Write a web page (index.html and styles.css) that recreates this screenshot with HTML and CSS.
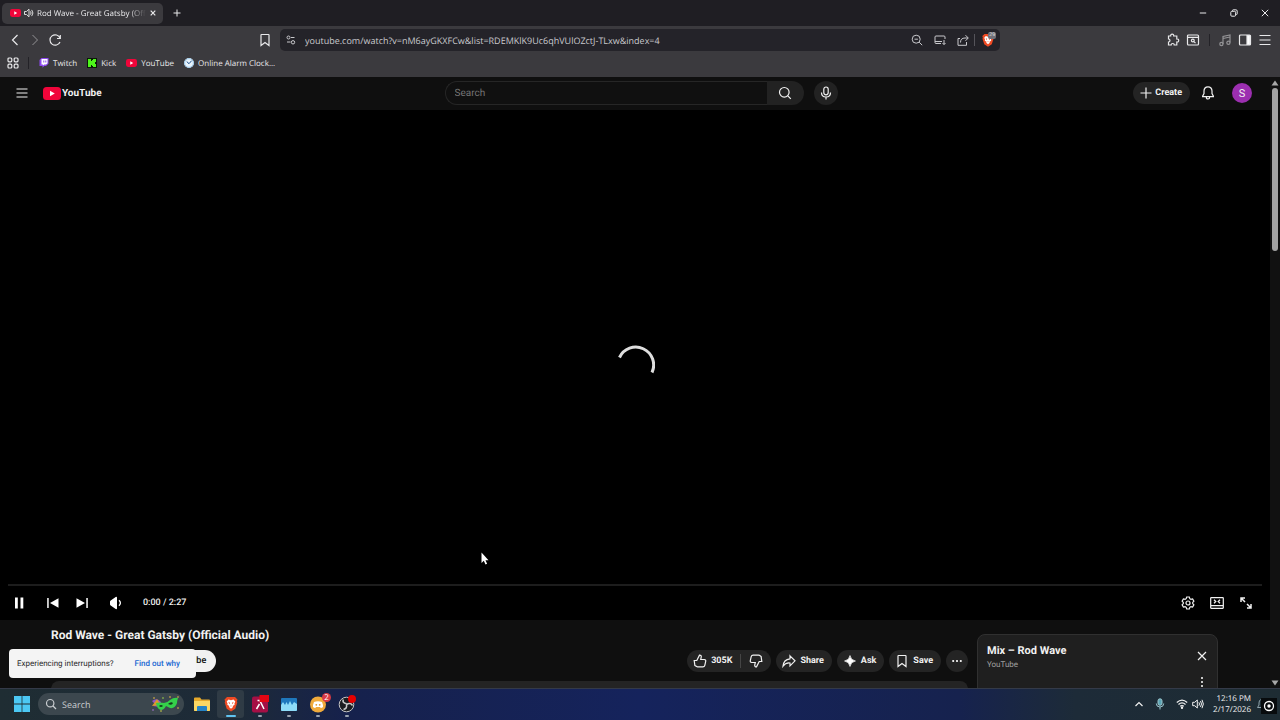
FILE: index.html
```html
<!DOCTYPE html>
<html lang="en">
<head>
<meta charset="utf-8">
<title>Rod Wave - Great Gatsby (Official Audio) - YouTube</title>
<link rel="stylesheet" href="styles.css">
</head>
<body>
<svg class="sprite" aria-hidden="true">
  <symbol id="yt-mark" viewBox="0 0 18 13"><rect width="18" height="13" rx="3.5" fill="#f0053a"/><path d="M7 3.8v5.4l4.8-2.7z" fill="#fff"/></symbol>
  <symbol id="bookmark" viewBox="0 0 14 14"><path d="M3.5 1.5h7q.5 0 .5.5v10.5L7 9.6l-4 2.9V2q0-.5.5-.5z"/></symbol>
  <symbol id="brave" viewBox="0 0 16 16"><path d="M4 1h8l2.5 2.5-.6 1.7.4 1.3-2 6.3L8 15.6l-4.300-2.800-2-6.300.4-1.300-.6-1.700z" fill="#ee4a23"/><path d="M8 4.200l2.500-.7 1.800 2-.9 2.200.3 1.100-2 1.300.3 1L8 12.800l-2-1.700.3-1-2-1.300.3-1.100-.9-2.200 1.800-2z" fill="#fff"/><path d="M5.300 6l1.700.7-.3 1.500zM10.700 6L9 6.700l.3 1.500zM7 9.700h2l-1 .9z" fill="#ee4a23"/></symbol>
</svg>

<header class="browser">
  <div class="tabstrip">
    <div class="tab">
      <svg class="fav" fill="none"><use href="#yt-mark"/></svg>
      <svg class="i10" viewBox="0 0 10 10"><path d="M.5 3.500h2L5 1.200v7.600L2.500 6.500h-2z" fill="none" stroke="#ddd"/><path d="M6.500 3.400q1.200 1.600 0 3.200M7.700 1.900q2.500 3.100 0 6.200" fill="none" stroke="#ddd"/></svg>
      <span class="tab-title">Rod Wave - Great Gatsby (Official Audio)</span>
      <button class="bare" aria-label="Close tab"><svg class="i8 line" viewBox="0 0 8 8"><path d="M1.700 1.700l4.600 4.600M6.300 1.700L1.700 6.300"/></svg></button>
    </div>
    <button class="bare newtab" aria-label="New tab"><svg class="i8 line thin" viewBox="0 0 8 8"><path d="M4 .5v7M.5 4h7"/></svg></button>
    <div class="window-controls">
      <button class="bare" aria-label="Minimize"><svg class="i8 line thin" viewBox="0 0 8 8"><path d="M.8 4h6.400"/></svg></button>
      <button class="bare" aria-label="Restore"><svg class="i8 line thin" viewBox="0 0 8 8"><rect x=".8" y="2.300" width="4.800" height="4.900" rx="1"/><path d="M2.500 2V1.500q0-.7.7-.7h2.700q1.300 0 1.300 1.300v2.700q0 .8-.9.800"/></svg></button>
      <button class="bare" aria-label="Close"><svg class="i8 line thin" viewBox="0 0 8 8"><path d="M.8.8l6.400 6.400M7.200.8L.8 7.200"/></svg></button>
    </div>
  </div>

  <div class="toolbar">
    <div class="nav">
      <button class="bare" aria-label="Back"><svg class="i14 line" viewBox="0 0 14 14"><path d="M9.500 2L4.500 7l5 5"/></svg></button>
      <button class="bare dim" aria-label="Forward"><svg class="i14 line thin" viewBox="0 0 14 14"><path d="M4.500 2l5 5-5 5"/></svg></button>
      <button class="bare" aria-label="Reload"><svg class="i14 line" viewBox="0 0 14 14"><path d="M12 9a5.200 5.200 0 1 1 0-4M12.300 2v3.500H9"/></svg></button>
      <button class="bare push" aria-label="Bookmark this page"><svg class="i14 line"><use href="#bookmark"/></svg></button>
    </div>
    <div class="address">
      <svg class="i10 line thin" viewBox="0 0 10 10"><circle cx="2.500" cy="2.500" r="1.500"/><path d="M5 2.500h3.500M1 7h3.500"/><circle cx="7" cy="7.300" r="1.700"/></svg>
      <input class="url" aria-label="Address" value="youtube.com/watch?v=nM6ayGKXFCw&amp;list=RDEMKlK9Uc6qhVUlOZctJ-TLxw&amp;index=4">
      <div class="address-tools">
        <button class="bare" aria-label="Zoom"><svg class="i12 line thin" viewBox="0 0 12 12"><circle cx="5.200" cy="5.200" r="4"/><path d="M8.200 8.200l3 3M3.500 5.200h3.400"/></svg></button>
        <button class="bare" aria-label="Install app"><svg class="i12 line thin" viewBox="0 0 12 12"><path d="M11 5V3q0-1-1-1H2Q1 2 1 3v5.500q0 1 1 1h5M1 7.500h7M10 6v4.500M8.500 9l1.500 1.500L11.500 9"/></svg></button>
        <button class="bare" aria-label="Share"><svg class="i12 line thin" viewBox="0 0 12 12"><path d="M3 4.500H1v6.800h8.500V8M3.500 8.500q0-4.500 4.500-4.500h3M8.500 1.200L11.300 4 8.500 6.800"/></svg></button>
      </div>
      <button class="bare shield" aria-label="Brave Shields"><svg class="i14"><use href="#brave"/></svg><span class="count">29</span></button>
    </div>
    <div class="extras">
      <button class="bare" aria-label="Extensions"><svg class="i14 line" viewBox="0 0 14 14"><path d="M2.500 3h2.200q-.2-1.800 1.500-1.800T7.700 3h3.100v3q1.900-.1 1.900 1.500T10.800 9v3H8.200q.1-1.500-1.500-1.500T5.200 12H2.500V9Q4 9 4 7.500T2.500 6z"/></svg></button>
      <button class="bare" aria-label="Search tabs"><svg class="i14 line" viewBox="0 0 14 14"><rect x="1.500" y="2" width="11" height="10" rx="1"/><path d="M1.500 4.300h11M7.900 8.600l1.600 1.600"/><circle cx="6.800" cy="7.500" r="1.400"/></svg></button>
      <span class="rule"></span>
      <button class="bare dim" aria-label="Playlist"><svg class="i14 line" viewBox="0 0 14 14"><path d="M5 11V3.500l7-1.500v7.500M5 5.500L12 4"/><circle cx="3.400" cy="11" r="1.600"/><circle cx="10.400" cy="9.700" r="1.600"/></svg></button>
      <button class="bare" aria-label="Sidebar"><svg class="i14 line" viewBox="0 0 14 14"><rect x="1.500" y="2" width="11" height="10" rx="1"/><path d="M9 2.500h3v9H9z" fill="#fff"/></svg></button>
      <button class="bare" aria-label="Menu"><svg class="i14 line" viewBox="0 0 14 14"><path d="M1.500 2.500h11M1.500 7h11M1.500 11.500h11"/></svg></button>
    </div>
  </div>

  <nav class="bookmarks" aria-label="Bookmarks">
    <button class="bare" aria-label="All bookmarks"><svg class="i12 line" viewBox="0 0 12 12"><rect x="1" y="1" width="3.800" height="3.800" rx="1"/><rect x="7.200" y="1" width="3.800" height="3.800" rx="1"/><rect x="1" y="7.200" width="3.800" height="3.800" rx="1"/><rect x="7.200" y="7.200" width="3.800" height="3.800" rx="1"/></svg></button>
    <span class="rule"></span>
    <a href="#"><svg class="i10" viewBox="0 0 10 10"><path d="M.5 2L2.500 0h7v5.800L7 8H5.300L3.500 9.800V8H.5z" fill="#8d48f0"/><path d="M2.500 1h6v4.300L7 6.500H5.200L4 7.600V6.500H2.500z" fill="#fff"/><path d="M4.800 2.500v2M6.800 2.500v2" stroke="#8d48f0"/></svg>Twitch</a>
    <a href="#"><svg class="i10" viewBox="0 0 10 10"><rect width="10" height="10" fill="#0b1a08"/><path d="M1 1h3v2h1V2h1V1h3v3H8v2h1v3H6V8H5V7H4v2H1z" fill="#4ef51b"/></svg>Kick</a>
    <a href="#"><svg class="fav"><use href="#yt-mark"/></svg>YouTube</a>
    <a href="#"><svg class="i10" viewBox="0 0 10 10"><circle cx="5" cy="5" r="4.900" fill="#e8f3fc"/><circle cx="5" cy="5" r="4.400" fill="none" stroke="#9bc8ea"/><path d="M2.700 3.500L5 5.700l2.600-3" fill="none" stroke="#1d4f8a"/></svg>Online Alarm Clock...</a>
  </nav>
</header>

<div class="viewport">
  <div class="page">
    <header class="masthead">
      <div class="brand">
        <button class="bare" aria-label="Guide"><svg class="i14 line" viewBox="0 0 14 14"><path d="M1.500 3h11M1.500 7h11M1.500 11h11"/></svg></button>
        <a class="logo" href="#"><svg class="logo-mark"><use href="#yt-mark"/></svg>YouTube</a>
      </div>
      <form class="search">
        <input class="search-box" type="search" placeholder="Search" aria-label="Search">
        <button class="search-go" type="button" aria-label="Search"><svg class="i14 line" viewBox="0 0 14 14"><circle cx="6.300" cy="6.300" r="4.800"/><path d="M9.800 9.800l3 3"/></svg></button>
        <button class="mic" type="button" aria-label="Search with your voice"><svg class="i14 line" viewBox="0 0 14 14"><rect x="4.800" y="1" width="4.400" height="7.800" rx="2.200"/><path d="M2.500 6.500q0 4.500 4.500 4.500t4.500-4.500M7 11v2.500"/></svg></button>
      </form>
      <div class="account">
        <button class="create"><svg class="i12 line" viewBox="0 0 12 12"><path d="M6 .5v11M.5 6h11"/></svg>Create</button>
        <button class="bare" aria-label="Notifications"><svg class="i14 line" viewBox="0 0 14 14"><path d="M7 .8c-2.500 0-4 1.800-4 4.200v2.500L1.600 10.200v.5h10.800v-.5L11 7.500V5C11 2.600 9.500.8 7 .8zM5.300 11q0 2 1.700 2t1.700-2"/></svg></button>
        <button class="avatar" aria-label="Account">S</button>
      </div>
    </header>

    <section class="player" aria-label="Video player">
      <div class="stage"></div>
      <svg class="spinner" viewBox="0 0 40 40"><path d="M4.500 12.500A17.300 17.300 0 0 1 37 27.500" fill="none" stroke="#dedede" stroke-width="3"/></svg>
      <div class="progress"></div>
      <div class="controls">
        <button class="bare" aria-label="Pause"><svg class="i14" viewBox="0 0 14 14"><path d="M3 1.500h2.800v11H3zM8.500 1.500h2.800v11H8.500z" fill="#fff"/></svg></button>
        <button class="bare prev" aria-label="Previous"><svg class="i14" viewBox="0 0 14 14"><path d="M1.200 2h1.500v10H1.200zM12.500 2.200v9.600L4 7z" fill="#fff"/></svg></button>
        <button class="bare" aria-label="Next"><svg class="i14" viewBox="0 0 14 14"><path d="M11.300 2h1.500v10h-1.500zM1.500 2.200v9.600L10 7z" fill="#fff"/></svg></button>
        <button class="bare volume" aria-label="Mute"><svg class="i14" viewBox="0 0 14 14"><path d="M1 5.800Q1 5 1.700 4.500L6.700.9Q8 .5 8 1.700v10.600Q8 13.500 6.700 13.100L1.700 9.500Q1 9 1 8.200z" fill="#fff"/><path d="M10 4.300q2.800 2.700 0 5.400" fill="none" stroke="#fff" stroke-width="1.300"/></svg></button>
        <span class="time">0:00 / 2:27</span>
        <div class="controls-end">
          <button class="bare" aria-label="Settings"><svg class="i14 line" viewBox="0 0 14 14"><path d="M5.700 1h2.600l.5 1.700 1.100.6 1.700-.4 1.300 2.200L11.700 6.400v1.200l1.200 1.300-1.300 2.200-1.700-.4-1.100.6-.5 1.700H5.700l-.5-1.700-1.100-.6-1.700.4-1.300-2.200 1.200-1.300V6.400L1.100 5.100l1.300-2.200 1.700.4 1.100-.6z"/><circle cx="7" cy="7" r="2"/></svg></button>
          <button class="bare" aria-label="Theater mode"><svg class="i14 line" viewBox="0 0 14 14"><rect x=".7" y="1.700" width="12.600" height="10.600" rx=".5"/><path d="M1 9.700h12M4 3.800L5.800 5.500 4 7.200M10 3.800L8.200 5.500 10 7.200"/></svg></button>
          <button class="bare" aria-label="Full screen"><svg class="i14 line" viewBox="0 0 14 14"><path d="M2 6V2h4M2 2l4 4M12 8v4H8M12 12L8 8" stroke-width="1.500"/></svg></button>
        </div>
      </div>
    </section>

    <div class="below">
      <main class="primary">
        <h1>Rod Wave - Great Gatsby (Official Audio)</h1>
        <div class="meta">
          <button class="subscribe">Subscribe</button>
          <div class="actions">
            <div class="votes">
              <button class="like"><svg class="i14 line" viewBox="0 0 14 14"><path d="M1.200 6.500h2.600L6.500 1.200q1.800-.1 1.800 1.600L7.700 5.500h3.600q1.800.2 1.400 1.900l-.9 3.900q-.4 1.500-1.900 1.500H4.500q-.8 0-2.600-1.200z"/></svg>305K</button>
              <button class="dislike" aria-label="Dislike"><svg class="i14 line" viewBox="0 0 14 14"><path d="M12.800 7.500h-2.600L7.500 12.800q-1.800.1-1.800-1.600l.6-2.700H2.700Q.9 8.300 1.300 6.600l.9-3.900Q2.600 1.200 4.100 1.200h5.400q.8 0 2.600 1.200z"/></svg></button>
            </div>
            <button class="pill"><svg class="i14 line" viewBox="0 0 14 14"><path d="M8 1.800L13 6.800 8 11.800V9Q3.500 8.500 1 12.200 1.500 5.500 8 4.800z"/></svg>Share</button>
            <button class="pill"><svg class="i14" viewBox="0 0 14 14"><path d="M7 1.500Q7.800 6.200 12.500 7 7.800 7.800 7 12.500 6.200 7.800 1.500 7 6.200 6.200 7 1.500z" fill="#fff" stroke="#fff" stroke-width=".6"/></svg>Ask</button>
            <button class="pill"><svg class="i14 line"><use href="#bookmark"/></svg>Save</button>
            <button class="more" aria-label="More actions"><svg class="i10" viewBox="0 0 10 10"><g fill="#fff"><circle cx="1.200" cy="5" r="1.100"/><circle cx="5" cy="5" r="1.100"/><circle cx="8.800" cy="5" r="1.100"/></g></svg></button>
          </div>
        </div>
        <div class="description"></div>
      </main>
      <aside class="mix">
        <div class="mix-text"><h2>Mix – Rod Wave</h2><p>YouTube</p></div>
        <div class="mix-tools">
          <button class="bare" aria-label="Close playlist"><svg class="i12 line" viewBox="0 0 12 12"><path d="M2 2l8 8M10 2l-8 8"/></svg></button>
          <button class="bare" aria-label="Playlist menu"><svg class="i12" viewBox="0 0 12 12"><g fill="#fff"><circle cx="6" cy="2" r="1"/><circle cx="6" cy="6" r="1"/><circle cx="6" cy="10" r="1"/></g></svg></button>
        </div>
      </aside>
    </div>

    <div class="toast" role="status"><span>Experiencing interruptions?</span><a href="#">Find out why</a></div>
  </div>
  <div class="scrollbar">
    <svg class="arrow" viewBox="0 0 8 6"><path d="M4 .5L7.500 5.500h-7z"/></svg>
    <div class="track"><div class="thumb"></div></div>
    <svg class="arrow" viewBox="0 0 8 6"><path d="M4 5.500L.5.5h7z"/></svg>
  </div>
</div>

<footer class="taskbar">
  <button class="bare start" aria-label="Start"><svg class="i16" viewBox="0 0 16 16"><path d="M0 0h7.600v7.600H0zM8.400 0H16v7.600H8.400zM0 8.400h7.600V16H0zM8.400 8.400H16V16H8.400z" fill="#4cc8f4"/></svg></button>
  <button class="task-search"><svg class="i12 line" viewBox="0 0 12 12"><circle cx="5.200" cy="5.200" r="3.700"/><path d="M8 8l3 3"/></svg>Search
    <svg class="mask" viewBox="0 0 30 18"><path d="M2 6q5-4 9 1l-2 5-6-1 2-2z" fill="#9254c8"/><path d="M2 11l5-7 4 6z" fill="#d99a2b"/><path d="M6 8q4-1 8 0 3 0 6-3 4-3 8-2-1 3-1 5-2 6-7 5-2-1-4-2-2 4-5 4-4-1-5-7z" fill="#34d04a"/><path d="M9 11q2-2 4 0-2 2-4 0zM18 9q3-3 5-1-1 3-5 1z" fill="#153a1c"/><g><circle cx="4" cy="3" r=".8" fill="#f5c542"/><circle cx="13" cy="3" r=".8" fill="#a6e04a"/><circle cx="20" cy="2" r=".8" fill="#f5c542"/><circle cx="28" cy="2" r=".8" fill="#e5c04a"/><circle cx="3" cy="15" r=".8" fill="#b07be0"/><circle cx="28" cy="13" r=".8" fill="#f5c542"/><circle cx="11" cy="16" r=".8" fill="#d6e04a"/></g></svg>
  </button>
  <div class="apps">
    <button class="app" aria-label="File Explorer"><svg class="i18" viewBox="0 0 18 18"><path d="M1 3.500q0-1 1-1h5l1.500 2H16q1 0 1 1V15q0 1-1 1H2q-1 0-1-1z" fill="#e6a92b"/><path d="M1 6h16v9q0 1-1 1H2q-1 0-1-1z" fill="#fbd763"/><path d="M4 16v-4q0-1 1-1h8q1 0 1 1v4z" fill="#2583c6"/></svg></button>
    <button class="app active" aria-label="Brave"><svg class="i16"><use href="#brave"/></svg></button>
    <button class="app running" aria-label="Lunar Client"><svg class="i18" viewBox="0 0 18 18"><rect x="1" y="1.500" width="16" height="16" rx="2" fill="#a50f45"/><path d="M6.500 5.500h2.300L13 14M8.500 9L5.500 14" fill="none" stroke="#fff" stroke-width="1.500"/><rect x="8.500" width="9.500" height="7" fill="#e30613"/></svg></button>
    <button class="app running" aria-label="Performance Monitor"><svg class="i18" viewBox="0 0 18 18"><rect x="1" y="3" width="16" height="13" rx="1" fill="#1f78bd"/><path d="M1 10l2-3 2 3 1.500-3 1.500 3 2-4 2 4 2-3 3 2v6q0 1-1 1H2q-1 0-1-1z" fill="#8edcf8"/></svg></button>
    <button class="app running" aria-label="Discord, 2 notifications"><svg class="i18" viewBox="0 0 18 18"><circle cx="9" cy="9.500" r="8" fill="#f0aa3c"/><path d="M5 7q4-1.600 8 0 1.300 3 1 5-1 1-2.300 1l-.7-1H7l-.7 1Q5 13 4 12q-.3-2 1-5z" fill="#fff"/><circle cx="7.300" cy="9.800" r=".9" fill="#e0962b"/><circle cx="10.700" cy="9.800" r=".9" fill="#e0962b"/></svg><span class="badge">2</span></button>
    <button class="app running" aria-label="OBS Studio"><svg class="i18" viewBox="0 0 18 18"><circle cx="8.500" cy="9.500" r="7.300" fill="#1b1c20" stroke="#c8c8c8"/><path d="M8.500 8.800Q4 8 5.300 4.500M8.500 9.500q4-2.500 6 1M8.500 9.500q1 4-3 5" fill="none" stroke="#c8c8c8" stroke-width="1.600"/><circle cx="14" cy="4" r="4" fill="#e60000"/></svg></button>
  </div>
  <div class="tray">
    <button class="bare" aria-label="Hidden icons"><svg class="i10 line" viewBox="0 0 10 10"><path d="M1.500 7L5 3.500 8.500 7"/></svg></button>
    <button class="bare tray-mic" aria-label="Microphone"><svg class="i12 line thin" viewBox="0 0 12 12"><rect x="4" y=".8" width="4" height="6.500" rx="2" fill="#5ca5b5"/><path d="M2.300 5.500q0 3.500 3.700 3.500t3.700-3.500M6 9v2.500"/></svg></button>
    <button class="bare net" aria-label="Network and sound"><svg class="i12 line" viewBox="0 0 12 12"><path d="M.8 4.500Q6-.2 11.200 4.500M2.500 6.500Q6 3.300 9.500 6.500M4.200 8.300Q6 6.800 7.800 8.300"/><circle cx="6" cy="9.800" r=".6"/></svg><svg class="i12 line thin" viewBox="0 0 12 12"><path d="M.7 4.300h2L5.300 2v8L2.700 7.700h-2zM6.900 4.300q1.200 1.700 0 3.400M8.500 3q2 3 0 6M10 1.800q2.700 4.200 0 8.400"/></svg></button>
    <div class="clock"><span>12:16 PM</span><span>2/17/2026</span></div>
    <div class="bell"><svg class="i12 line thin" viewBox="0 0 12 12"><path d="M9.500 1.500Q3 0 3 5v2L1.500 9.500h9M5 10.500q1 1 2 0M7.500 4h3l-3 3h3"/></svg>
      <svg class="capture" viewBox="0 0 16 16"><rect width="16" height="16" fill="#080b0d"/><circle cx="8" cy="8" r="4.500" fill="none" stroke="#fff" stroke-width="1.300"/><circle cx="8" cy="8" r="1.700" fill="#fff"/></svg></div>
  </div>
</footer>

<svg class="pointer" viewBox="0 0 8 13"><path d="M.5.5v10.500l2.300-2.200 1.700 3.700 1.600-.7-1.600-3.600h3z" fill="#fff"/></svg>
</body>
</html>
```
FILE: styles.css
```css
* { box-sizing: border-box; }

body {
  margin: 0;
  height: 100vh;
  display: flex;
  flex-direction: column;
  overflow: hidden;
  background: #0f0f0f;
  color: #f1f1f1;
  font-family: Roboto, sans-serif;
  font-size: 9px;
  text-rendering: geometricPrecision;
}

button, input { font: inherit; color: inherit; text-rendering: inherit; }
button { border: 0; padding: 0; background: none; }
a { color: inherit; text-decoration: none; }
h1, h2, p { margin: 0; }
svg { display: block; flex: none; }

.sprite { position: absolute; width: 0; height: 0; }
.i8 { width: 8px; height: 8px; }
.i10 { width: 10px; height: 10px; }
.i12 { width: 12px; height: 12px; }
.i14 { width: 14px; height: 14px; }
.i16 { width: 16px; height: 16px; }
.i18 { width: 18px; height: 18px; }
.fav { width: 11px; height: 8px; }
.line { fill: none; stroke: currentColor; stroke-width: 1.2; }
.thin { stroke-width: 1; }
.bare { display: flex; align-items: center; justify-content: center; }
.dim { opacity: 0.5; }

/* Browser chrome */
.browser {
  flex: none;
  background: #3b3a3e;
  color: #e9e9eb;
  font-family: "Open Sans", "Noto Sans", sans-serif;
  font-size: 8px;
  font-weight: 500;
}

.tabstrip {
  display: flex;
  align-items: center;
  height: 26px;
  padding: 0 11px 0 2px;
  background: #1f1e23;
}

.tab {
  display: flex;
  align-items: center;
  width: 161px;
  height: 21px;
  padding: 0 6px 0 8px;
  gap: 3px;
  border-radius: 5px;
  background: #3b3a3e;
}

.tab-title {
  flex: 1;
  overflow: hidden;
  white-space: nowrap;
  mask-image: linear-gradient(90deg, #000 85%, transparent);
}

.newtab { margin-left: 10px; }
.window-controls { display: flex; gap: 23px; margin-left: auto; }

.toolbar { display: flex; align-items: center; height: 28px; }
.nav, .extras { display: flex; align-items: center; gap: 6px; flex: 0 0 280px; padding: 0 8px; }
.extras { justify-content: flex-end; }
.push { margin-left: auto; }

.rule {
  width: 6px;
  height: 12px;
  background: linear-gradient(#232227, #232227) center / 1px 100% no-repeat;
}

.address {
  display: flex;
  align-items: center;
  flex: 1;
  height: 22px;
  padding: 0 5px 0 6px;
  border-radius: 5px;
  background: #242329;
  color: #c9c9cd;
}

.url {
  flex: 1;
  min-width: 0;
  margin-left: 9px;
  padding: 0;
  border: 0;
  outline: 0;
  background: none;
  font-size: 9px;
}

.address-tools {
  display: flex;
  gap: 11px;
  padding-right: 5px;
  border-right: 1px solid #55545a;
}

.shield { position: relative; margin-left: 6px; }

.count {
  position: absolute;
  top: -1px;
  right: -1px;
  padding: 0 1px;
  border-radius: 2px;
  background: #707078;
  color: #eee;
  font-size: 5px;
  line-height: 7px;
}

.bookmarks {
  display: flex;
  align-items: center;
  height: 23px;
  padding: 0 7px 5px;
}

.bookmarks a { display: flex; align-items: center; gap: 4px; margin-right: 10px; }
.bookmarks .rule { margin: 0 8px 0 6px; }

/* Page */
.viewport { display: flex; flex: 1; min-height: 0; }

.page {
  position: relative;
  display: flex;
  flex-direction: column;
  flex: 1;
  min-width: 0;
  overflow: hidden;
}

.masthead {
  display: grid;
  grid-template-columns: 1fr auto 1fr;
  align-items: center;
  flex: none;
  height: 33px;
  padding: 0 0 1px 12px;
}

.brand, .account, .search { display: flex; align-items: center; }
.brand { gap: 14px; padding-left: 3px; }

.logo {
  display: flex;
  align-items: center;
  gap: 1px;
  font-size: 10px;
  font-weight: 700;
}

.logo-mark { width: 18px; height: 13px; }

.search-box {
  width: 322px;
  height: 24px;
  padding: 0 9px;
  border: 1px solid #262626;
  border-right: 0;
  border-radius: 12px 0 0 12px;
  outline: 0;
  background: #101010;
  font-size: 10px;
}

.search-box::placeholder { color: #757575; opacity: 1; }

.search-go, .mic, .create, .pill, .more, .votes, .like, .dislike {
  display: flex;
  align-items: center;
  justify-content: center;
}

.search-go { width: 37px; height: 24px; border-radius: 0 12px 12px 0; background: #222; }
.mic { width: 24px; height: 24px; margin-left: 10px; border-radius: 50%; background: #222; }

.account { justify-content: flex-end; gap: 11px; padding-right: 18px; }

.create {
  gap: 3px;
  height: 22px;
  padding: 0 8px 0 7px;
  border-radius: 11px;
  background: #242424;
  font-weight: 700;
}

.avatar {
  width: 20px;
  height: 20px;
  margin-left: 6px;
  border-radius: 50%;
  background: #9c2fb0;
  font-size: 11px;
}

.player {
  position: relative;
  display: flex;
  flex-direction: column;
  flex: 1;
  background: #000;
}

.stage { flex: 1; }
.spinner { position: absolute; inset: 0; width: 40px; height: 40px; margin: auto; }
.progress { height: 2px; margin: 0 8px; background: #1d1d1d; }

.controls { display: flex; align-items: center; height: 34px; padding: 0 17px 0 12px; }
.prev { margin: 0 15px 0 20px; }
.volume { margin: 0 20px; }
.time { font-weight: 500; }
.controls-end { display: flex; gap: 15px; margin-left: auto; }

.below {
  display: grid;
  grid-template-columns: 1fr 241px;
  gap: 9px;
  flex: 0 0 68px;
  padding: 0 52px 0 51px;
  overflow: hidden;
}

.primary { display: flex; flex-direction: column; padding-top: 7px; min-width: 0; }
h1 { font-size: 12px; line-height: 16px; }
.meta { display: flex; align-items: center; justify-content: space-between; margin: 7px 0 9px; }

.subscribe {
  height: 22px;
  margin-left: 105px;
  padding: 0 10px;
  border-radius: 11px;
  background: #f1f1f1;
  color: #0f0f0f;
  font-weight: 500;
}

.actions { display: flex; gap: 5px; font-weight: 700; }
.votes, .pill, .more { height: 22px; border-radius: 11px; background: #242424; }
.like { gap: 4px; padding: 0 8px 0 6px; border-right: 1px solid #454545; }
.dislike { width: 30px; }
.pill { gap: 4px; padding: 0 8px 0 6px; }
.more { width: 22px; }
.description { flex: 0 0 60px; border-radius: 8px; background: #242424; }

.mix {
  display: flex;
  justify-content: space-between;
  height: 100px;
  margin-top: 14px;
  padding: 9px 9px 0 9px;
  border: 1px solid #303030;
  border-radius: 8px;
  background: #1f1f1f;
}

h2 { font-size: 11px; line-height: 14px; }
.mix p { margin-top: 2px; color: #a0a0a0; font-size: 8px; line-height: 10px; }
.mix-tools { display: flex; flex-direction: column; gap: 14px; padding-top: 6px; }

.toast {
  position: absolute;
  left: 9px;
  bottom: 10px;
  display: flex;
  align-items: center;
  gap: 21px;
  height: 29px;
  padding: 0 16px 0 8px;
  border-radius: 4px;
  background: #f4f4f4;
  color: #2b2b2b;
  font-size: 8px;
}

.toast a { color: #1967d2; font-weight: 500; }

.scrollbar {
  display: flex;
  flex-direction: column;
  align-items: center;
  gap: 2px;
  width: 10px;
  padding: 3px 0 2px;
  background: #111;
}

.arrow { width: 8px; height: 6px; fill: #a8a8a8; }
.track { flex: 1; }
.thumb { width: 6px; height: 163px; border-radius: 3px; background: #a3a3a3; }

/* Taskbar */
.taskbar {
  display: flex;
  align-items: center;
  flex: 0 0 32px;
  padding: 0 3px 1px 14px;
  border-top: 1px solid #343a48;
  background: linear-gradient(90deg, #1f2d33 0, #1d2a38 19%, #16214c 27%, #15235c 50%, #16224e 75%, #1d2b38 84%, #1e2c33 100%);
  font-family: "Open Sans", "Noto Sans", sans-serif;
  font-size: 8px;
}

.task-search {
  display: flex;
  align-items: center;
  gap: 5px;
  width: 146px;
  height: 22px;
  margin: 0 4px 0 8px;
  padding: 0 4px 0 7px;
  border-radius: 11px;
  background: #3c474e;
  color: #c9cdd0;
  font-size: 9px;
}

.mask { width: 30px; height: 18px; margin-left: auto; }
.apps { display: flex; gap: 2px; }

.app {
  position: relative;
  display: flex;
  align-items: center;
  justify-content: center;
  width: 27px;
  height: 28px;
  border-radius: 3px;
}

.active { background: #2f3b45; }

.active::after, .running::after {
  content: "";
  position: absolute;
  bottom: 1px;
  width: 4px;
  height: 2px;
  border-radius: 1px;
  background: #9aa3b0;
}

.active::after { width: 10px; background: #60c3f0; }

.badge {
  position: absolute;
  top: 3px;
  right: 0;
  width: 9px;
  border-radius: 50%;
  background: #d83a45;
  color: #fff;
  font-size: 8px;
  line-height: 9px;
}

.tray { display: flex; align-items: center; margin-left: auto; }
.tray-mic { margin: 0 10px; color: #9cc7cf; }
.net { gap: 4px; }
.clock { display: flex; flex-direction: column; align-items: flex-end; margin: 0 5px 0 9px; line-height: 11px; }
.bell { position: relative; width: 21px; color: #8fa3ab; }
.capture { position: absolute; top: 0; right: 0; width: 16px; height: 16px; }

.pointer { position: absolute; left: 481px; top: 552px; width: 8px; height: 13px; }
```
